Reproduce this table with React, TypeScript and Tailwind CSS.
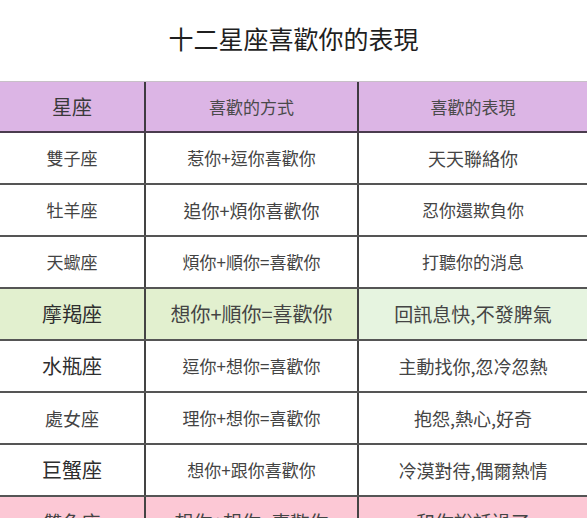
type Row = {
  sign: string
  way: string
  show: string
  bg?: [string, string, string]
  signSize: string
  waySize: string
  showSize: string
}

const rows: Row[] = [
  { sign: '雙子座', way: '惹你+逗你喜歡你', show: '天天聯絡你', signSize: 'text-[17px]', waySize: 'text-[17px]', showSize: 'text-[18px]' },
  { sign: '牡羊座', way: '追你+煩你喜歡你', show: '忍你還欺負你', signSize: 'text-[17px]', waySize: 'text-[18px]', showSize: 'text-[17px]' },
  { sign: '天蠍座', way: '煩你+順你=喜歡你', show: '打聽你的消息', signSize: 'text-[17px]', waySize: 'text-[17px]', showSize: 'text-[17px]' },
  {
    sign: '摩羯座',
    way: '想你+順你=喜歡你',
    show: '回訊息快,不發脾氣',
    bg: ['bg-[#e2f0cf]', 'bg-[#e2f0cf]', 'bg-[#e6f4e0]'],
    signSize: 'text-[20px]',
    waySize: 'text-[20px]',
    showSize: 'text-[19px]',
  },
  { sign: '水瓶座', way: '逗你+想你=喜歡你', show: '主動找你,忽冷忽熱', signSize: 'text-[20px]', waySize: 'text-[17px]', showSize: 'text-[18px]' },
  { sign: '處女座', way: '理你+想你=喜歡你', show: '抱怨,熱心,好奇', signSize: 'text-[18px]', waySize: 'text-[17px]', showSize: 'text-[18px]' },
  { sign: '巨蟹座', way: '想你+跟你喜歡你', show: '冷漠對待,偶爾熱情', signSize: 'text-[20px]', waySize: 'text-[17px]', showSize: 'text-[18px]' },
  {
    sign: '雙魚座',
    way: '想你+想你=喜歡你',
    show: '和你說話過了',
    bg: ['bg-[#fcc8d5]', 'bg-[#fcc8d5]', 'bg-[#fcc8d5]'],
    signSize: 'text-[19px]',
    waySize: 'text-[19px]',
    showSize: 'text-[19px]',
  },
]

const font = { fontFamily: '"Noto Sans CJK TC", "Noto Sans", sans-serif' }

function App() {
  return (
    <main className="h-[518px] w-[587px] overflow-hidden bg-white" style={font}>
      <h1 className="pt-[21px] text-center text-[25px] leading-[34px] font-normal text-[#1f1f1f]">十二星座喜歡你的表現</h1>

      <div className="mt-[26px] border-t border-[#c8c0c8]">
        <div className="grid h-[51px] grid-cols-[146px_213px_1fr] border-b-2 border-[#4b3c4e] bg-[#dcb5e5] text-[#3a3a3a]">
          <div className="flex items-center justify-center border-r-2 border-[#3f3a40] text-[20px]">星座</div>
          <div className="flex items-center justify-center border-r-2 border-[#3f3a40] text-[17px] text-[#4a4a4a]">喜歡的方式</div>
          <div className="flex items-center justify-center text-[17px] text-[#4a4a4a]">喜歡的表現</div>
        </div>

        {rows.map((r) => (
          <div key={r.sign} className="grid h-[52px] grid-cols-[146px_213px_1fr] border-b-2 border-[#555] text-[#444]">
            <div className={`flex items-center justify-center border-r-2 border-[#444] ${r.bg?.[0] ?? ''} ${r.signSize} ${r.signSize === 'text-[20px]' ? 'text-[#2e2e2e]' : ''}`}>
              {r.sign}
            </div>
            <div className={`flex items-center justify-center border-r-2 border-[#444] ${r.bg?.[1] ?? ''} ${r.waySize}`}>{r.way}</div>
            <div className={`flex items-center justify-center ${r.bg?.[2] ?? ''} ${r.showSize}`}>{r.show}</div>
          </div>
        ))}
      </div>
    </main>
  )
}

export default App
